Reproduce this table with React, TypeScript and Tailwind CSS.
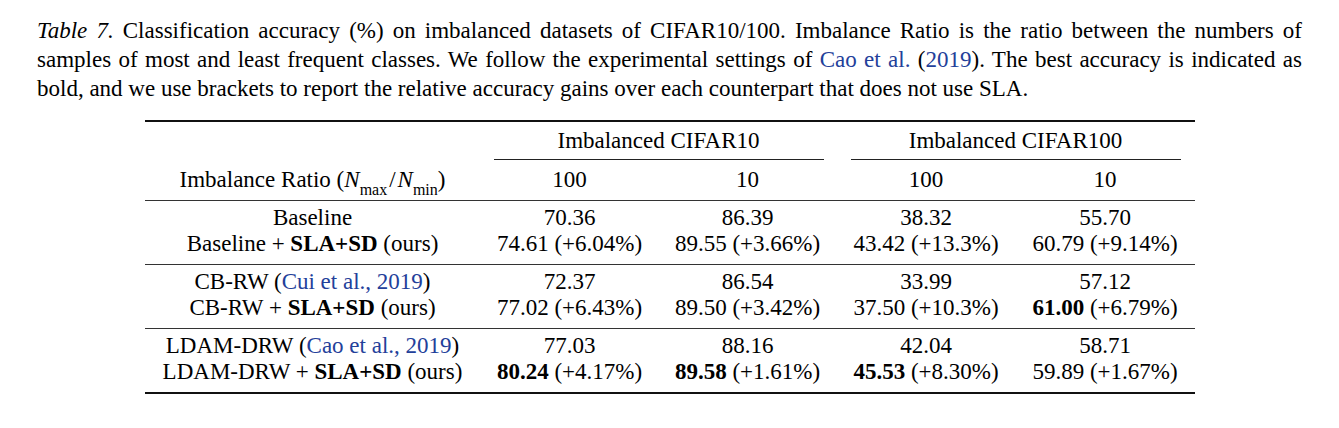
import React from "react";

const serif = { fontFamily: '"Liberation Serif", "Times New Roman", serif' };

const Cite = ({ children }: { children: React.ReactNode }) => (
  <span className="text-[#23409a]">{children}</span>
);

const Cell = ({ children }: { children: React.ReactNode }) => (
  <div className="text-center whitespace-nowrap">{children}</div>
);

type Row = { label: React.ReactNode; vals: React.ReactNode[] };

const B = ({ children }: { children: React.ReactNode }) => <b className="font-bold">{children}</b>;

const groups: Row[][] = [
  [
    { label: "Baseline", vals: ["70.36", "86.39", "38.32", "55.70"] },
    {
      label: (
        <>
          Baseline + <B>SLA+SD</B> (ours)
        </>
      ),
      vals: ["74.61 (+6.04%)", "89.55 (+3.66%)", "43.42 (+13.3%)", "60.79 (+9.14%)"],
    },
  ],
  [
    {
      label: (
        <>
          CB-RW (<Cite>Cui et al., 2019</Cite>)
        </>
      ),
      vals: ["72.37", "86.54", "33.99", "57.12"],
    },
    {
      label: (
        <>
          CB-RW + <B>SLA+SD</B> (ours)
        </>
      ),
      vals: [
        "77.02 (+6.43%)",
        "89.50 (+3.42%)",
        "37.50 (+10.3%)",
        <>
          <B>61.00</B> (+6.79%)
        </>,
      ],
    },
  ],
  [
    {
      label: (
        <>
          LDAM-DRW (<Cite>Cao et al., 2019</Cite>)
        </>
      ),
      vals: ["77.03", "88.16", "42.04", "58.71"],
    },
    {
      label: (
        <>
          LDAM-DRW + <B>SLA+SD</B> (ours)
        </>
      ),
      vals: [
        <>
          <B>80.24</B> (+4.17%)
        </>,
        <>
          <B>89.58</B> (+1.61%)
        </>,
        <>
          <B>45.53</B> (+8.30%)
        </>,
        "59.89 (+1.67%)",
      ],
    },
  ],
];

export default function App() {
  return (
    <div className="w-[1339px] h-[428px] bg-white text-black overflow-hidden" style={serif}>
      <p className="mx-[37px] pt-[16px] text-[23px] leading-[29px] text-justify">
        <i>Table 7.</i> Classification accuracy (%) on imbalanced datasets of CIFAR10/100. Imbalance Ratio is the
        ratio between the numbers of samples of most and least frequent classes. We follow the experimental settings
        of <Cite>Cao et al.</Cite> (<Cite>2019</Cite>). The best accuracy is indicated as bold, and we use brackets to
        report the relative accuracy gains over each counterpart that does not use SLA.
      </p>

      <div className="w-[1050px] mx-auto mt-[17px] text-[23px] leading-[26px]">
        <div className="h-[2px] bg-[#111]" />
        <div className="grid grid-cols-[336px_356px_358px] pt-[6px]">
          <div />
          <div className="flex flex-col items-center">
            <div className="leading-[26px]">Imbalanced CIFAR10</div>
            <div className="self-stretch mx-[13px] mt-[5px] h-[1px] bg-[#222]" />
          </div>
          <div className="flex flex-col items-center">
            <div className="leading-[26px]">Imbalanced CIFAR100</div>
            <div className="self-stretch mx-[14px] mt-[5px] h-[1px] bg-[#222]" />
          </div>
        </div>
        <div className="grid grid-cols-[336px_178px_178px_179px_179px] pt-[7px] pb-[6px]">
          <Cell>
            Imbalance Ratio (<i>N</i>
            <sub className="text-[16px] not-italic align-[-4px] leading-none">max</sub>
            <span className="px-[2px]">/</span>
            <i>N</i>
            <sub className="text-[16px] align-[-4px] leading-none">min</sub>)
          </Cell>
          <Cell>100</Cell>
          <Cell>10</Cell>
          <Cell>100</Cell>
          <Cell>10</Cell>
        </div>
        {groups.map((g, gi) => (
          <div key={gi}>
            <div className="h-[1px] bg-[#333]" />
            <div className="pt-[4px] pb-[7px]">
              {g.map((r, ri) => (
                <div key={ri} className="grid grid-cols-[336px_178px_178px_179px_179px]">
                  <Cell>{r.label}</Cell>
                  {r.vals.map((v, vi) => (
                    <Cell key={vi}>{v}</Cell>
                  ))}
                </div>
              ))}
            </div>
          </div>
        ))}
        <div className="h-[2px] bg-[#111]" />
      </div>
    </div>
  );
}
